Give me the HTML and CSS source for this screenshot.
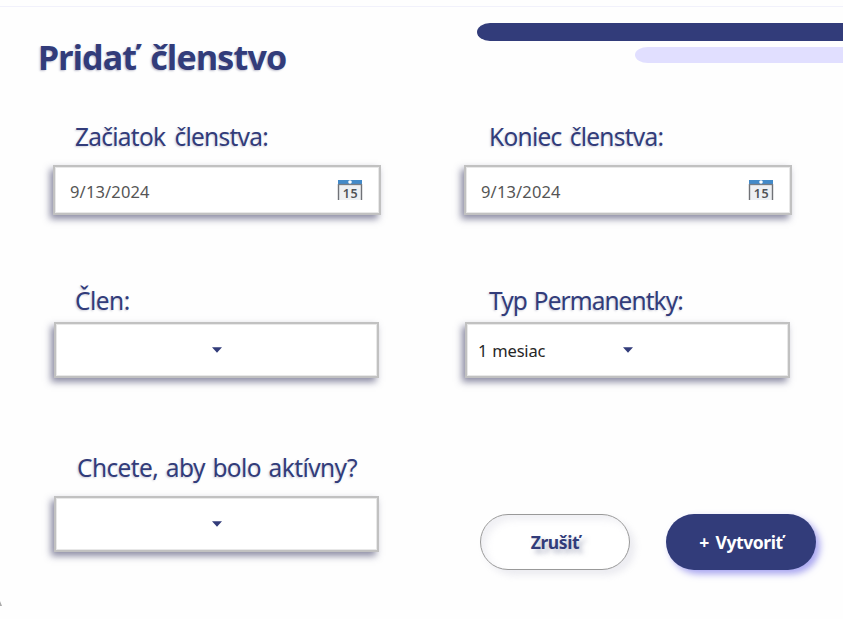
FILE: index.html
```html
<!DOCTYPE html>
<html lang="sk">
<head>
<meta charset="utf-8">
<title>Pridať členstvo</title>
<link rel="stylesheet" href="styles.css">
</head>
<body>
<main class="window">
  <header class="header">
    <h1 class="title">Pridať členstvo</h1>
    <div class="stripes">
      <div class="stripe stripe-dark"></div>
      <div class="stripe stripe-light"></div>
    </div>
  </header>
  <div class="row row-dates">
    <div class="field">
      <div class="label label-start">Začiatok členstva:</div>
      <div class="box date"><span class="date-text">9/13/2024</span>
        <svg class="calendar" width="26" height="22" viewBox="0 0 26 22"><path d="M1 5h24v16H1z" fill="#eef0f3"/><path d="M1.5 5v16M24.5 5v16" stroke="#707277" stroke-width="1.4"/><path d="M1 1h24v4H1z" fill="#438ac9"/><path d="M1 5.5h24" stroke="#777c83" stroke-width="1.3"/><circle cx="13" cy="3" r="1.8" fill="#fff"/><text x="13.5" y="18.5" text-anchor="middle" class="day">15</text></svg>
      </div>
    </div>
    <div class="field">
      <div class="label label-end">Koniec členstva:</div>
      <div class="box date"><span class="date-text">9/13/2024</span>
        <svg class="calendar" width="26" height="22" viewBox="0 0 26 22"><path d="M1 5h24v16H1z" fill="#eef0f3"/><path d="M1.5 5v16M24.5 5v16" stroke="#707277" stroke-width="1.4"/><path d="M1 1h24v4H1z" fill="#438ac9"/><path d="M1 5.5h24" stroke="#777c83" stroke-width="1.3"/><circle cx="13" cy="3" r="1.8" fill="#fff"/><text x="13.5" y="18.5" text-anchor="middle" class="day">15</text></svg>
      </div>
    </div>
  </div>
  <div class="row row-selects">
    <div class="field">
      <div class="label label-member">Člen:</div>
      <div class="box combo"><span class="value"></span><svg class="arrow" width="10" height="6" viewBox="0 0 10 6"><path d="M0 .3h10L5 5.7z"/></svg></div>
    </div>
    <div class="field">
      <div class="label label-type">Typ Permanentky:</div>
      <div class="box combo"><span class="value">1 mesiac</span><svg class="arrow" width="10" height="6" viewBox="0 0 10 6"><path d="M0 .3h10L5 5.7z"/></svg></div>
    </div>
  </div>
  <div class="row row-active">
    <div class="field">
      <div class="label label-active">Chcete, aby bolo aktívny?</div>
      <div class="box combo"><span class="value"></span><svg class="arrow" width="10" height="6" viewBox="0 0 10 6"><path d="M0 .3h10L5 5.7z"/></svg></div>
    </div>
    <div class="actions">
      <button class="button cancel">Zrušiť</button>
      <button class="button create">+ Vytvoriť</button>
    </div>
  </div>
  <footer class="footer"><svg width="3" height="6" viewBox="0 0 3 6"><path d="M0 0v5h2z" fill="#aaa"/></svg></footer>
</main>
</body>
</html>
```
FILE: styles.css
```css
* { box-sizing: border-box; }
body { margin: 0; background: #fefefe; overflow: hidden; font-family: "Noto Sans", sans-serif; color: #323c7a; }
.window { width: 843px; height: 619px; padding-top: 6px; overflow: hidden; }
.header { display: flex; justify-content: space-between; height: 113px; border-top: 1px solid #f1f1fb; }
.title { margin: 26px 0 0 38px; font-size: 34px; line-height: 49px; letter-spacing: -.8px; word-spacing: 6px; font-weight: 700; white-space: nowrap; text-shadow: -1px 1px 2px #777b9a77; }
.stripes { width: 366px; padding-top: 16px; display: flex; flex-direction: column; align-items: flex-end; gap: 6px; }
.stripe { border-radius: 13px 0 0 13px / 50% 0 0 50%; }
.stripe-dark { width: 366px; height: 18px; background: #323c7a; }
.stripe-light { width: 208px; height: 16px; background: #e1dfff; }
.row { display: grid; grid-template-columns: 411px 1fr; padding-left: 53px; }
.row-dates { height: 164px; }
.row-selects { height: 167px; }
.row-active { height: 151px; }
.label { height: 34px; margin-left: 22px; font-size: 24.5px; line-height: 36px; white-space: nowrap; text-shadow: -1px 1px 2px #777b9a55; }
.label-start { letter-spacing: -.75px; word-spacing: 3.5px; }
.label-end { margin-left: 25px; letter-spacing: -.75px; word-spacing: 2.5px; }
.label-type { margin-left: 25px; letter-spacing: -.95px; word-spacing: 1.5px; }
.label-member { letter-spacing: -.5px; }
.label-active { margin-left: 24px; letter-spacing: -.6px; word-spacing: 1.8px; }
.box { display: flex; align-items: center; background: #fff; border: 2px solid #c1c1c1; box-shadow: inset 0 0 0 1px #e8e8e8, -3px 4px 7px #35365f90; }
.date { width: 328px; height: 50px; margin-top: 12px; padding: 0 16px 0 15px; justify-content: space-between; }
.date-text { font-size: 16.5px; letter-spacing: .15px; color: #555; padding-top: 3px; }
.calendar { margin-top: -1px; }
.day { font: 600 12.5px "Noto Sans", sans-serif; fill: #505256; letter-spacing: .5px; }
.combo { width: 325px; height: 56px; margin: 5px 0 0 1px; padding-left: 11px; }
.row-active .combo { margin-top: 12px; }
.value { width: 145px; font-size: 16.5px; letter-spacing: -.2px; word-spacing: 1px; color: #262626; }
.arrow { fill: #323c7a; }
.actions { display: flex; gap: 36px; padding: 64px 0 0 16px; }
.button { width: 150px; height: 56px; padding: 0; border-radius: 28px; font: 700 17.5px "Noto Sans", sans-serif; letter-spacing: -.4px; word-spacing: 2.5px; white-space: nowrap; }
.cancel { color: #323c7a; background: #fff; border: 1px solid #999; box-shadow: 5px 5px 7px #dfdfe799, inset 5px 5px 7px #dfdfe777; text-shadow: 4px 4px 5px #777b9a88; }
.create { color: #fff; background: #323c7a; border: 0; box-shadow: 4px 4px 7px #7c78e8aa; }
.footer { height: 18px; display: flex; align-items: flex-start; }
```
